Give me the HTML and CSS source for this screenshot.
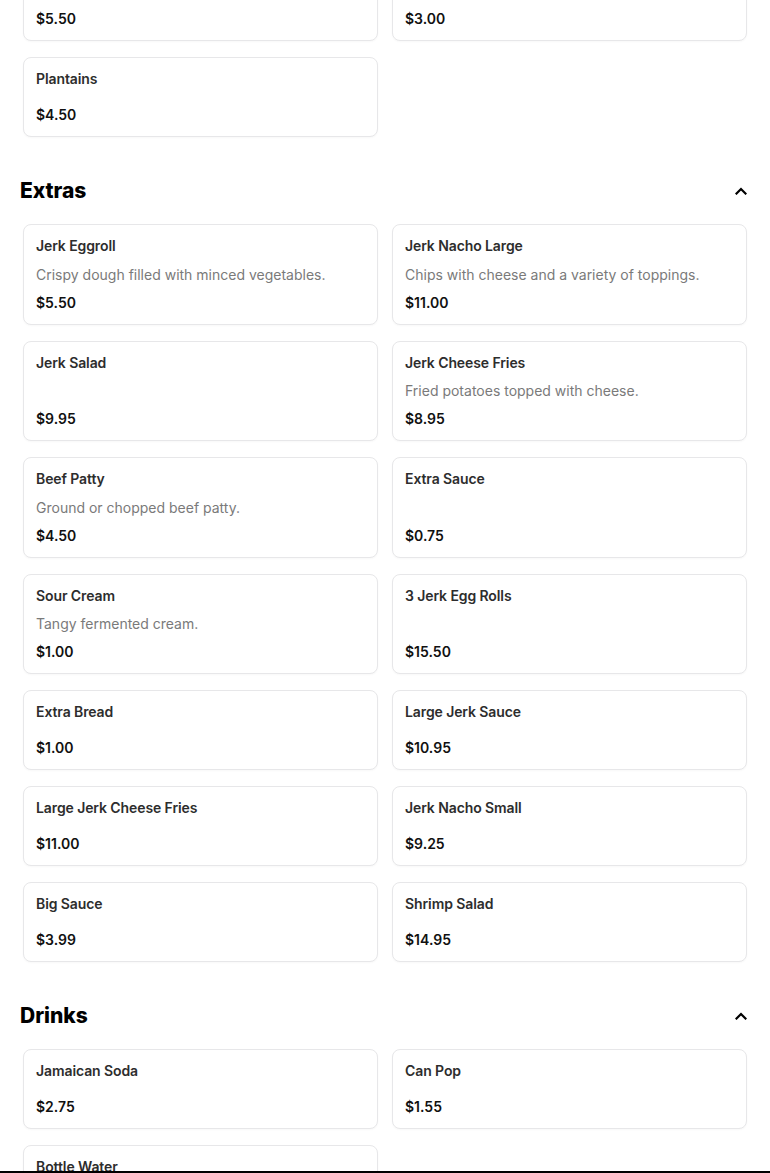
FILE: index.html
```html
<!DOCTYPE html>
<html lang="en">
<head>
<meta charset="utf-8">
<title>Menu</title>
<link rel="stylesheet" href="styles.css">
</head>
<body>
<main class="menu">
  <section class="section section-first">
    <div class="grid">
      <div class="card">
        <div class="title">Fried Dumplings</div>
        <div class="price">$5.50</div>
      </div>
      <div class="card">
        <div class="title">Festival Bread</div>
        <div class="price">$3.00</div>
      </div>
      <div class="card">
        <div class="title">Plantains</div>
        <div class="price">$4.50</div>
      </div>
    </div>
  </section>

  <section class="section">
    <div class="section-head">
      <h2>Extras</h2>
      <svg class="chev" width="12" height="8" viewBox="0 0 12 8"><path d="M1.5 6.5 L6 2 L10.5 6.5" fill="none" stroke="#000" stroke-width="2.2" stroke-linecap="square"/></svg>
    </div>
    <div class="grid">
      <div class="card">
        <div class="title">Jerk Eggroll</div>
        <div class="desc">Crispy dough filled with minced vegetables.</div>
        <div class="price">$5.50</div>
      </div>
      <div class="card">
        <div class="title">Jerk Nacho Large</div>
        <div class="desc">Chips with cheese and a variety of toppings.</div>
        <div class="price">$11.00</div>
      </div>
      <div class="card">
        <div class="title">Jerk Salad</div>
        <div class="price">$9.95</div>
      </div>
      <div class="card">
        <div class="title">Jerk Cheese Fries</div>
        <div class="desc">Fried potatoes topped with cheese.</div>
        <div class="price">$8.95</div>
      </div>
      <div class="card">
        <div class="title">Beef Patty</div>
        <div class="desc">Ground or chopped beef patty.</div>
        <div class="price">$4.50</div>
      </div>
      <div class="card">
        <div class="title">Extra Sauce</div>
        <div class="price">$0.75</div>
      </div>
      <div class="card">
        <div class="title">Sour Cream</div>
        <div class="desc">Tangy fermented cream.</div>
        <div class="price">$1.00</div>
      </div>
      <div class="card">
        <div class="title">3 Jerk Egg Rolls</div>
        <div class="price">$15.50</div>
      </div>
      <div class="card">
        <div class="title">Extra Bread</div>
        <div class="price">$1.00</div>
      </div>
      <div class="card">
        <div class="title">Large Jerk Sauce</div>
        <div class="price">$10.95</div>
      </div>
      <div class="card">
        <div class="title">Large Jerk Cheese Fries</div>
        <div class="price">$11.00</div>
      </div>
      <div class="card">
        <div class="title">Jerk Nacho Small</div>
        <div class="price">$9.25</div>
      </div>
      <div class="card">
        <div class="title">Big Sauce</div>
        <div class="price">$3.99</div>
      </div>
      <div class="card">
        <div class="title">Shrimp Salad</div>
        <div class="price">$14.95</div>
      </div>
    </div>
  </section>

  <section class="section">
    <div class="section-head">
      <h2>Drinks</h2>
      <svg class="chev" width="12" height="8" viewBox="0 0 12 8"><path d="M1.5 6.5 L6 2 L10.5 6.5" fill="none" stroke="#000" stroke-width="2.2" stroke-linecap="square"/></svg>
    </div>
    <div class="grid">
      <div class="card">
        <div class="title">Jamaican Soda</div>
        <div class="price">$2.75</div>
      </div>
      <div class="card">
        <div class="title">Can Pop</div>
        <div class="price">$1.55</div>
      </div>
      <div class="card">
        <div class="title">Bottle Water</div>
        <div class="price">$1.50</div>
      </div>
    </div>
  </section>
</main>
<div class="bottom-bar"></div>
</body>
</html>
```

FILE: styles.css
```css
* { box-sizing: border-box; }

html, body {
  margin: 0;
  padding: 0;
  background: #ffffff;
}

body {
  font-family: "Inter", "Liberation Sans", sans-serif;
  color: #1f1f1f;
  overflow: hidden;
}

.menu {
  display: flex;
  flex-direction: column;
  margin-top: -39px;
}

.section {
  padding-top: 40px;
}

.section-first {
  padding-top: 0;
}

.section-head {
  display: flex;
  align-items: center;
  justify-content: space-between;
  padding: 0 23px 0 20px;
  height: 28px;
  margin-bottom: 19px;
}

.section-head h2 {
  margin: 0;
  font-size: 21px;
  line-height: 28px;
  font-weight: 800;
  color: #000;
}

.chev {
  display: block;
}

.grid {
  display: grid;
  grid-template-columns: 1fr 1fr;
  column-gap: 14px;
  row-gap: 16px;
  padding: 0 23px;
}

.card {
  display: flex;
  flex-direction: column;
  min-height: 80px;
  padding: 11px 12px;
  border: 1px solid #e7e7e9;
  border-radius: 8px;
  background: #fff;
  box-shadow: 0 1px 2px rgba(0, 0, 0, 0.03);
}

.title {
  font-size: 14px;
  line-height: 20px;
  font-weight: 600;
  letter-spacing: -0.1px;
  color: #2d2d2d;
}

.desc {
  margin-top: 8.5px;
  font-size: 14px;
  line-height: 20px;
  font-weight: 400;
  color: #7a7a7a;
}

.price {
  margin-top: auto;
  padding-top: 8px;
  font-size: 14px;
  line-height: 20px;
  font-weight: 600;
  color: #111;
}

.bottom-bar {
  position: fixed;
  left: 0;
  right: 0;
  bottom: 0;
  height: 2px;
  background: #000;
}
```
